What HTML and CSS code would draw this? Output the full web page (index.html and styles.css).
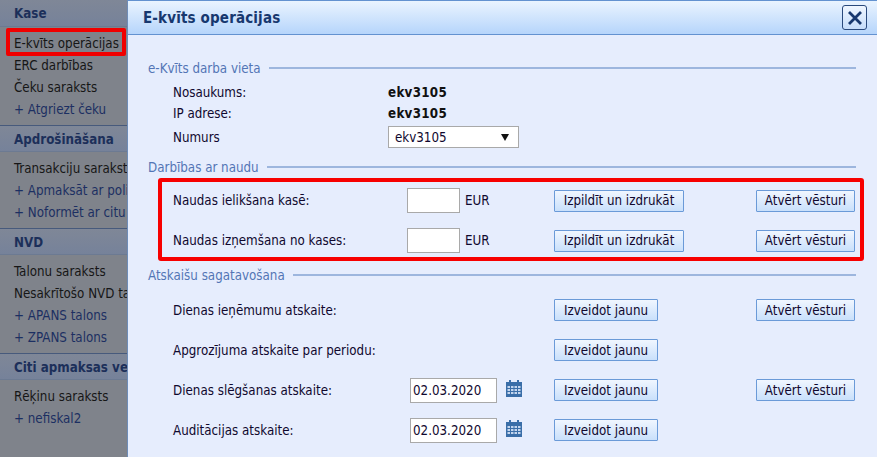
FILE: index.html
```html
<!DOCTYPE html>
<html lang="lv">
<head>
<meta charset="utf-8">
<title>E-kvīts operācijas</title>
<link rel="stylesheet" href="styles.css">
</head>
<body>
<div class="app">
  <aside class="sidebar">
    <div class="group">
      <h3 class="group-title first">Kase</h3>
      <ul class="menu">
        <li class="item selected">E-kvīts operācijas</li>
        <li class="item">ERC darbības</li>
        <li class="item">Čeku saraksts</li>
        <li class="item add">+ Atgriezt čeku</li>
      </ul>
    </div>
    <div class="group">
      <h3 class="group-title">Apdrošināšana</h3>
      <ul class="menu">
        <li class="item">Transakciju saraksts</li>
        <li class="item add">+ Apmaksāt ar polisi</li>
        <li class="item add">+ Noformēt ar citu</li>
      </ul>
    </div>
    <div class="group">
      <h3 class="group-title">NVD</h3>
      <ul class="menu">
        <li class="item">Talonu saraksts</li>
        <li class="item">Nesakrītošo NVD talonu</li>
        <li class="item add">+ APANS talons</li>
        <li class="item add">+ ZPANS talons</li>
      </ul>
    </div>
    <div class="group">
      <h3 class="group-title">Citi apmaksas veidi</h3>
      <ul class="menu">
        <li class="item">Rēķinu saraksts</li>
        <li class="item add">+ nefiskal2</li>
      </ul>
    </div>
  </aside>
  <main class="dialog">
    <header class="dialog-head">
      <h1 class="dialog-title">E-kvīts operācijas</h1>
      <button class="close" type="button" aria-label="Aizvērt">
        <svg viewBox="0 0 16 16" width="16" height="16"><path d="M2 2 L14 14 M14 2 L2 14" fill="none" stroke="#17386f" stroke-width="2.8"/></svg>
      </button>
    </header>
    <div class="dialog-body">
      <section class="section s-place">
        <h2 class="legend"><span>e-Kvīts darba vieta</span></h2>
        <div class="info"><span class="label">Nosaukums:</span><b class="value">ekv3105</b></div>
        <div class="info"><span class="label">IP adrese:</span><b class="value">ekv3105</b></div>
        <div class="info info-select"><span class="label">Numurs</span>
          <div class="select"><span>ekv3105</span><i class="arrow"></i></div>
        </div>
      </section>
      <section class="section s-cash">
        <h2 class="legend"><span>Darbības ar naudu</span></h2>
        <div class="highlight">
          <div class="row">
            <span class="label">Naudas ielikšana kasē:</span>
            <div class="field"><input class="amount" type="text" aria-label="Summa"><span class="cur">EUR</span></div>
            <button class="btn wide" type="button">Izpildīt un izdrukāt</button>
            <button class="btn hist" type="button">Atvērt vēsturi</button>
          </div>
          <div class="row">
            <span class="label">Naudas izņemšana no kases:</span>
            <div class="field"><input class="amount" type="text" aria-label="Summa"><span class="cur">EUR</span></div>
            <button class="btn wide" type="button">Izpildīt un izdrukāt</button>
            <button class="btn hist" type="button">Atvērt vēsturi</button>
          </div>
        </div>
      </section>
      <section class="section s-reports">
        <h2 class="legend"><span>Atskaišu sagatavošana</span></h2>
        <div class="row">
          <span class="label">Dienas ieņēmumu atskaite:</span>
          <div class="field"></div>
          <button class="btn new" type="button">Izveidot jaunu</button>
          <button class="btn hist" type="button">Atvērt vēsturi</button>
        </div>
        <div class="row">
          <span class="label">Apgrozījuma atskaite par periodu:</span>
          <div class="field"></div>
          <button class="btn new" type="button">Izveidot jaunu</button>
        </div>
        <div class="row">
          <span class="label">Dienas slēgšanas atskaite:</span>
          <div class="field date-field"><input class="date" type="text" value="02.03.2020" aria-label="Datums">
            <svg class="cal" viewBox="0 0 16 17" width="16" height="17"><use href="#cal"/></svg></div>
          <button class="btn new" type="button">Izveidot jaunu</button>
          <button class="btn hist" type="button">Atvērt vēsturi</button>
        </div>
        <div class="row">
          <span class="label">Auditācijas atskaite:</span>
          <div class="field date-field"><input class="date" type="text" value="02.03.2020" aria-label="Datums">
            <svg class="cal" viewBox="0 0 16 17" width="16" height="17"><use href="#cal"/></svg></div>
          <button class="btn new" type="button">Izveidot jaunu</button>
        </div>
      </section>
    </div>
  </main>
</div>
<svg class="defs" width="0" height="0" aria-hidden="true">
  <symbol id="cal" viewBox="0 0 16 17">
    <path fill="#3a6ea8" d="M0 2h3V0h2v2h6V0h2v2h3v15H0z"/>
    <path fill="#c4d6ee" d="M1.500 6h2.500v2H1.500zM5 6h2.500v2H5zM8.500 6H11v2H8.500zM12 6h2.500v2H12zM1.500 9h2.500v2H1.500zM5 9h2.500v2H5zM8.500 9H11v2H8.500zM12 9h2.500v2H12zM1.500 12h2.500v2H1.500zM5 12h2.500v2H5zM8.500 12H11v2H8.500zM12 12h2.500v2H12z"/>
  </symbol>
</svg>
</body>
</html>
```
FILE: styles.css
```css
* { box-sizing: border-box; }
html, body { margin: 0; padding: 0; }
body {
  width: 877px;
  height: 457px;
  overflow: hidden;
  font-family: "DejaVu Sans Condensed", "DejaVu Sans", sans-serif;
  font-size: 13.25px;
  color: #10082e;
}
.defs { position: absolute; }
.app { display: flex; height: 457px; }

/* sidebar (dimmed by the modal) */
.sidebar {
  width: 127px;
  flex: none;
  overflow: hidden;
  background: #7f838b;
  white-space: nowrap;
}
.group-title {
  margin: 0;
  height: 27px;
  line-height: 28px;
  padding-left: 14px;
  font-size: 13.25px;
  font-weight: bold;
  color: #1c2f5a;
  background: linear-gradient(#7f8797, #76829a);
  border-top: 1px solid #475a7c;
  border-bottom: 1px solid #6c7a92;
}
.group-title.first { border-top: 0; height: 27px; }
.menu { list-style: none; margin: 5px 0; padding: 0; }
.item {
  height: 22px;
  line-height: 24px;
  padding-left: 14px;
  color: #161616;
}
.item.add { color: #1c2f62; }
.item.selected {
  margin: -4px 0 -2px 6px;
  padding-left: 4px;
  width: 120px;
  height: 28px;
  line-height: 23px;
  border: 4px solid #f00000;
  border-radius: 2px;
  overflow: hidden;
}

/* dialog */
.dialog { flex: 1; min-width: 0; background: #e6edfd; border-left: 1px solid #6f8db8; }
.dialog-head {
  height: 35px;
  display: flex;
  align-items: center;
  justify-content: space-between;
  padding: 0 10px 0 15px;
  background: linear-gradient(#eaf4ff, #b6d5fb);
  border-top: 1px solid #6392d0;
  border-bottom: 1px solid #6392d0;
}
.dialog-title {
  margin: 0;
  font-size: 15px;
  font-weight: bold;
  letter-spacing: .15px;
  color: #17386f;
}
.close {
  width: 25px;
  height: 25px;
  padding: 0;
  display: flex;
  align-items: center;
  justify-content: center;
  background: linear-gradient(#eff6ff, #c6ddfa);
  border: 1px solid #29497c;
  border-radius: 3px;
}
.dialog-body { padding: 24px 21px 0 20px; }
.section { margin: 0; }
.legend {
  margin: 0;
  display: flex;
  align-items: center;
  height: 18px;
  font-size: 13.25px;
  font-weight: normal;
  color: #5375b5;
}
.legend::after {
  content: "";
  flex: 1;
  height: 2px;
  margin-left: 8px;
  background: #9db6de;
}
.s-place .legend { margin-bottom: 5px; }
.info {
  display: flex;
  align-items: center;
  height: 21px;
  padding-left: 25px;
}
.label { flex: none; width: 215px; }
.row .label { width: 234px; }
.value { font-weight: bold; color: #111; letter-spacing: .3px; }
.info-select { height: 22px; margin-top: 2px; }
.select {
  width: 131px;
  height: 22px;
  padding: 0 9px 0 6px;
  display: flex;
  align-items: center;
  justify-content: space-between;
  background: #fff;
  border: 1px solid #a9a9a9;
}
.arrow {
  width: 0; height: 0;
  border-left: 4px solid transparent;
  border-right: 4px solid transparent;
  border-top: 7px solid #111;
}
.s-cash { margin-top: 10px; }
.highlight {
  margin: 2px 0 0 10px;
  width: 706px;
  height: 83px;
  padding: 1px 0 0 11px;
  border: 4px solid #f70000;
  border-radius: 3px;
  display: flex;
  flex-direction: column;
  gap: 5px;
}
.highlight .row { width: 683px; padding-left: 0; height: 35px; flex: none; }
.row {
  display: flex;
  align-items: center;
  height: 40px;
  padding-left: 25px;
}
.field { flex: none; width: 147px; display: flex; align-items: center; }
.amount {
  width: 53px;
  height: 25px;
  background: #fff;
  border: 1px solid #a9a9a9;
  padding: 0 3px;
}
.cur { margin-left: 5px; }
.date-field { padding-left: 3px; }
.date {
  width: 87px;
  height: 25px;
  background: #fff;
  border: 1px solid #a9a9a9;
  padding: 0 2px;
  font: 13.25px "DejaVu Sans Condensed", "DejaVu Sans", sans-serif;
  color: #10082e;
}
.cal { margin: -4px 0 0 9px; }
.btn {
  flex: none;
  height: 22px;
  padding: 0;
  font: 13.25px "DejaVu Sans Condensed", "DejaVu Sans", sans-serif;
  color: #10082e;
  background: linear-gradient(#f0f6ff, #c9e0fb);
  border: 1px solid #6a9ad8;
  border-radius: 1px;
}
.wide { width: 130px; margin-right: 72px; }
.new { width: 104px; margin-right: 98px; }
.hist { width: 99px; }
.s-reports { margin-top: 5px; }
.s-reports .legend { margin-bottom: 6px; }
```
